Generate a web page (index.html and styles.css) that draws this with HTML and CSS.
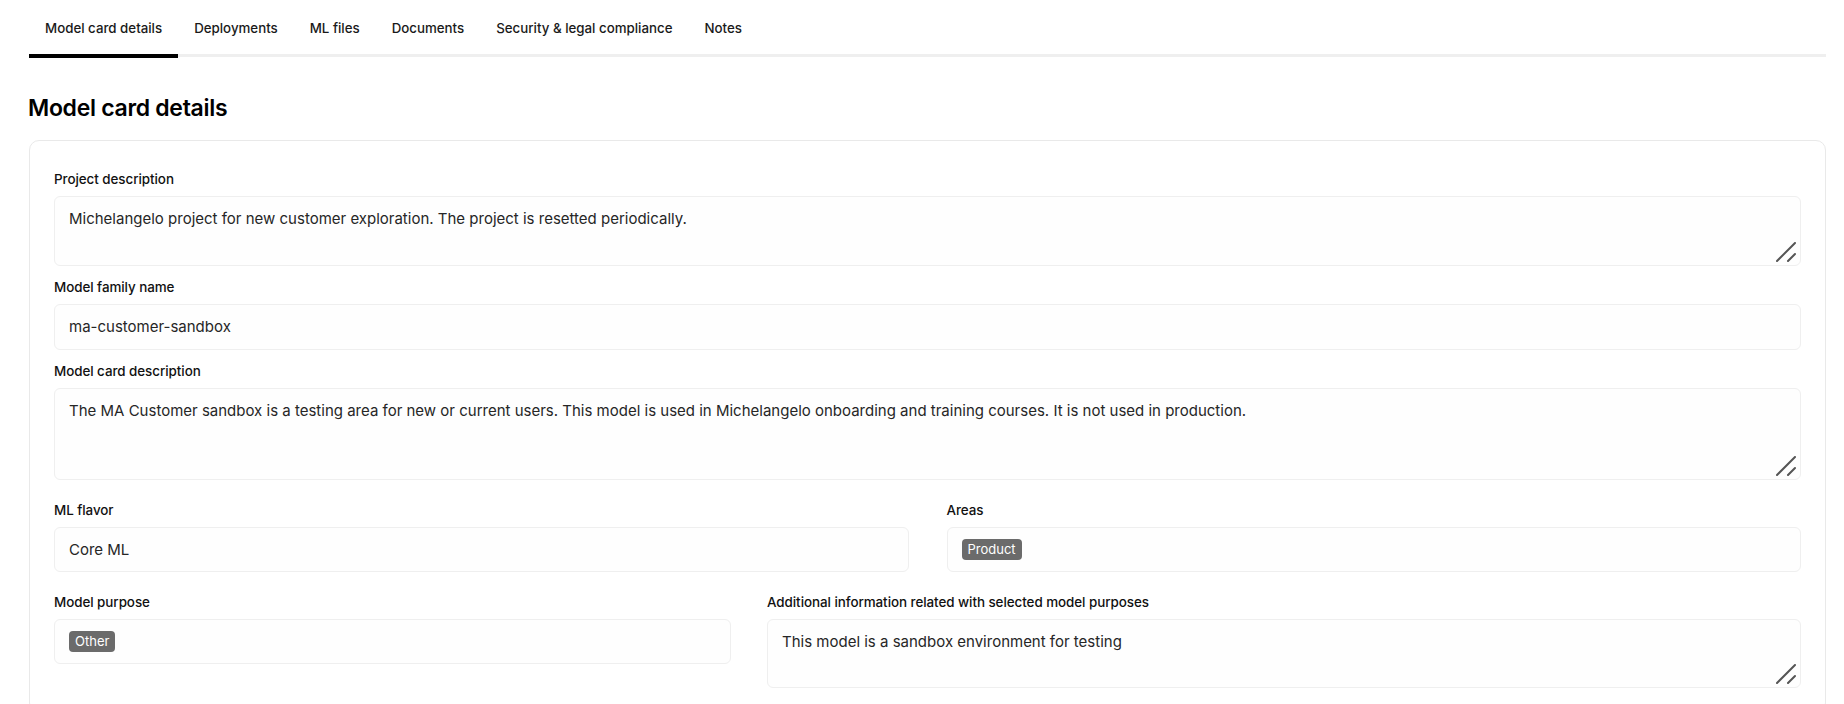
FILE: index.html
```html
<!DOCTYPE html>
<html lang="en">
<head>
  <meta charset="UTF-8" />
  <meta name="viewport" content="width=device-width, initial-scale=1" />
  <title>Model card details</title>
  <link rel="stylesheet" href="styles.css">
</head>
<body>

  <div class="page">
    <nav class="tabs">
      <a class="tab tab--active">Model card details</a>
      <a class="tab">Deployments</a>
      <a class="tab">ML files</a>
      <a class="tab">Documents</a>
      <a class="tab">Security &amp; legal compliance</a>
      <a class="tab">Notes</a>
    </nav>

    <h1 class="title">Model card details</h1>

    <div class="card">
      <div class="field field--tight">
        <div class="label">Project description</div>
        <div class="input input--area input--short">
          Michelangelo project for new customer exploration. The project is resetted periodically.
          <svg class="grip" width="20" height="20" viewBox="0 0 20 20">
            <line x1="1" y1="19" x2="19" y2="1" />
            <line x1="12" y1="19" x2="19" y2="12" />
          </svg>
        </div>
      </div>

      <div class="field field--tight">
        <div class="label">Model family name</div>
        <div class="input">ma-customer-sandbox</div>
      </div>

      <div class="field">
        <div class="label">Model card description</div>
        <div class="input input--area input--tall">
          The MA Customer sandbox is a testing area for new or current users. This model is used in Michelangelo onboarding and training courses. It is not used in production.
          <svg class="grip" width="20" height="20" viewBox="0 0 20 20">
            <line x1="1" y1="19" x2="19" y2="1" />
            <line x1="12" y1="19" x2="19" y2="12" />
          </svg>
        </div>
      </div>

      <div class="row row--half field">
        <div>
          <div class="label">ML flavor</div>
          <div class="input input--row">Core ML</div>
        </div>
        <div>
          <div class="label">Areas</div>
          <div class="input input--row"><span class="chip">Product</span></div>
        </div>
      </div>

      <div class="row row--split">
        <div>
          <div class="label">Model purpose</div>
          <div class="input input--row"><span class="chip">Other</span></div>
        </div>
        <div>
          <div class="label">Additional information related with selected model purposes</div>
          <div class="input input--area input--mid">
            This model is a sandbox environment for testing
            <svg class="grip" width="20" height="20" viewBox="0 0 20 20">
              <line x1="1" y1="19" x2="19" y2="1" />
              <line x1="12" y1="19" x2="19" y2="12" />
            </svg>
          </div>
        </div>
      </div>
    </div>
  </div>

</body>
</html>
```

FILE: styles.css
```css
html, body {
  margin: 0;
  padding: 0;
  background: #fff;
  font-family: 'Inter', 'Liberation Sans', sans-serif;
  color: #1f1f1f;
}

.page {
  padding: 0 18px 0 29px;
}

/* tab strip */
.tabs {
  display: flex;
  border-bottom: 3px solid #efefef;
}

.tab {
  padding: 20px 16px 18px;
  font-size: 13.3px;
  line-height: 16px;
  font-weight: 500;
  color: #1a1a1a;
  margin-bottom: -3px;
  border-bottom: 3px solid transparent;
}

.tab--active {
  border-bottom: 4px solid #000;
  margin-bottom: -4px;
}

.title {
  margin: 37px 0 18px -1px;
  font-size: 23px;
  line-height: 28px;
  font-weight: 600;
  letter-spacing: -0.3px;
  color: #000;
}

.card {
  border: 1px solid #e9e9e9;
  border-radius: 10px;
  padding: 30px 24px 24px;
}

.field {
  margin-bottom: 22px;
}

.field--tight {
  margin-bottom: 13px;
}

.label {
  font-size: 13.4px;
  line-height: 16px;
  font-weight: 500;
  letter-spacing: -0.05px;
  color: #111;
  margin-bottom: 9px;
}

.input {
  position: relative;
  box-sizing: border-box;
  height: 46px;
  display: flex;
  align-items: center;
  padding: 0 14px;
  background: #fefefe;
  border: 1px solid #efefef;
  border-radius: 6px;
  font-size: 15px;
  line-height: 20px;
  color: #262626;
}

.input--row { height: 45px; }

.input--area {
  align-items: flex-start;
  padding-top: 12px;
}

.input--short { height: 70px; }
.input--tall { height: 92px; }
.input--mid { height: 69px; }

.grip {
  position: absolute;
  right: 4px;
  bottom: 3px;
  stroke: #555;
  stroke-width: 2;
  stroke-linecap: round;
}

.chip {
  display: inline-block;
  background: #6b6b6b;
  color: #fff;
  font-size: 13px;
  line-height: 21px;
  padding: 0 6px;
  border-radius: 4px;
}

.row {
  display: grid;
}

.row--half {
  grid-template-columns: 1fr 1fr;
  column-gap: 38px;
}

.row--split {
  grid-template-columns: 677fr 1034fr;
  column-gap: 36px;
}
```
